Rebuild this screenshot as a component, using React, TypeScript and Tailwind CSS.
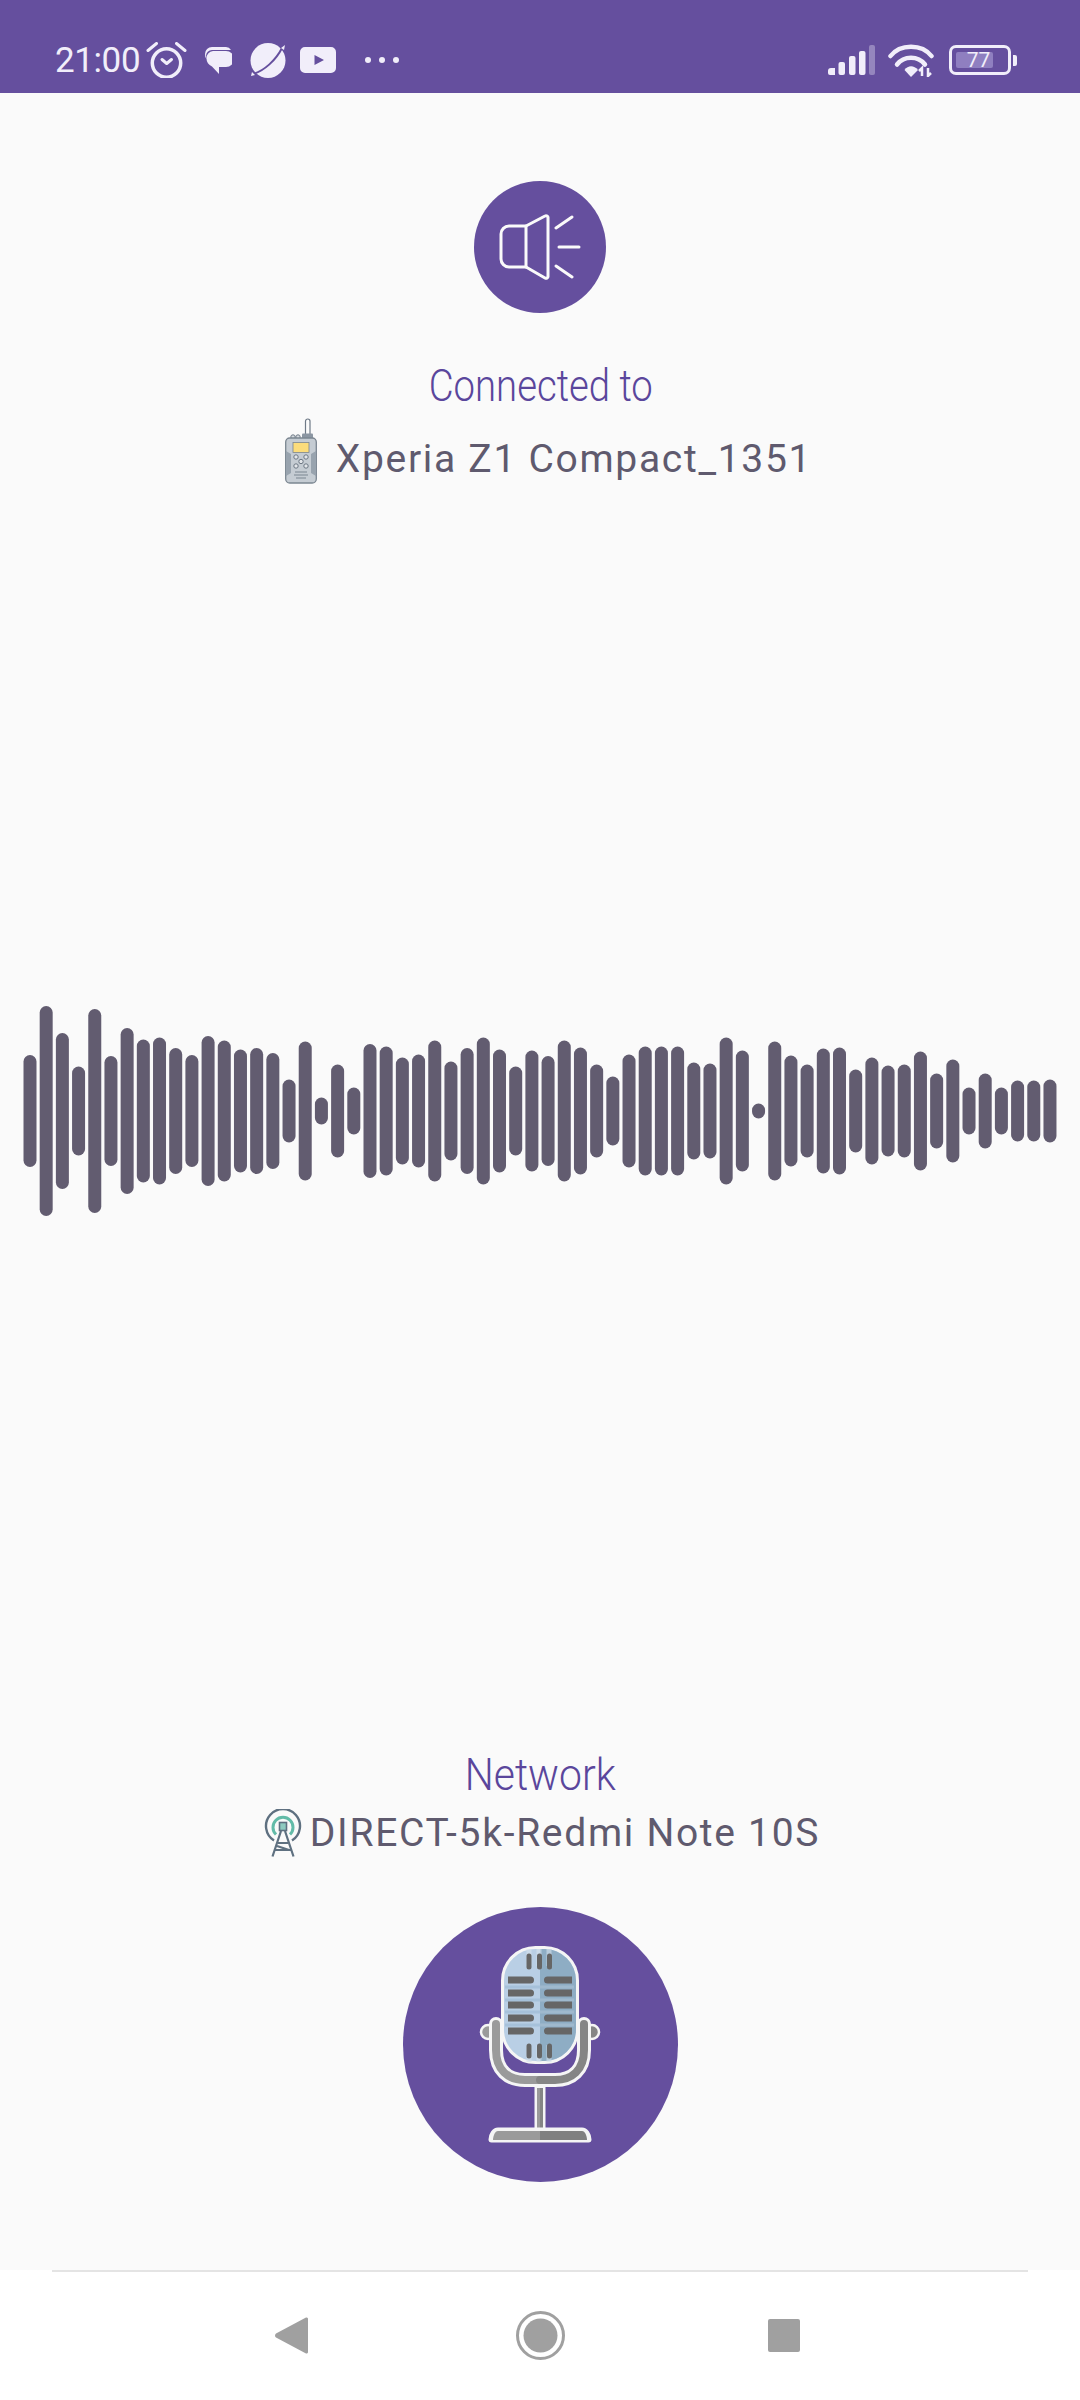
const bars = [
  112, 210, 156, 89, 204, 110, 166, 143, 147, 126, 112, 150, 141, 123, 126, 116,
  63, 139, 27, 93, 47, 134, 129, 107, 113, 141, 99, 126, 147, 123, 89, 121,
  110, 141, 127, 93, 69, 113, 129, 129, 129, 97, 95, 147, 121, 15, 139, 111,
  93, 125, 127, 83, 107, 91, 93, 119, 75, 103, 47, 75, 47, 61, 61, 63,
];

const AlarmIcon = () => (
  <svg width="41" height="36" viewBox="0 0 41 36" fill="none" stroke="#f1eefa" strokeLinecap="round">
    <circle cx="20.500" cy="21" r="14.200" strokeWidth="3.500" />
    <path d="M16 17.500l4.700 4 4.800-4" strokeWidth="3" strokeLinejoin="round" />
    <path d="M2 8.500L10.500 1.500M39 8.500L30.500 1.500" strokeWidth="3" />
  </svg>
);

const ChatIcon = () => (
  <svg width="28" height="28" viewBox="0 0 28 28">
    <path d="M8 1h14a6.500 6.500 0 0 1 5 3H8a6 6 0 0 0-6 6c0 1 .2 2 .6 3A7 7 0 0 1 1 8a7 7 0 0 1 7-7z" fill="#f1eefa" />
    <path d="M9 5h13a6 6 0 0 1 0 16h-7v7l-7-7.500C4.500 19 2.500 16 2.500 12.500A7 7 0 0 1 9 5z" fill="#f1eefa" />
  </svg>
);

const PlanetIcon = () => (
  <svg width="36" height="35" viewBox="0 0 36 35">
    <circle cx="18" cy="17.500" r="17.500" fill="#f1eefa" />
    <path d="M3 31C14 28 26 17 32 5" fill="none" stroke="#654f9e" strokeWidth="2" />
    <path d="M31 5l4-3-1 5zM2 29l-1 4 4-1z" fill="#f1eefa" />
  </svg>
);

const VideoIcon = () => (
  <svg width="36" height="26" viewBox="0 0 36 26">
    <path fillRule="evenodd" d="M5 0h26a5 5 0 0 1 5 5v16a5 5 0 0 1-5 5H5a5 5 0 0 1-5-5V5a5 5 0 0 1 5-5zM14.500 8v10l9.500-5z" fill="#f1eefa" />
  </svg>
);

const SignalIcon = () => (
  <svg width="47" height="30" viewBox="0 0 47 30" fill="#f1eefa">
    <path d="M0 26a3 3 0 0 1 3-3h4v7H2a2 2 0 0 1-2-2z" />
    <rect x="10.500" y="17" width="6.500" height="13" rx="2" />
    <rect x="21" y="11" width="6.500" height="19" rx="2" />
    <rect x="31" y="6" width="6.500" height="24" rx="2" />
    <rect x="41" y="0" width="6" height="30" rx="2" fillOpacity="0.35" />
  </svg>
);

const WifiIcon = () => (
  <svg width="46" height="34" viewBox="0 0 46 34" fill="none" stroke="#f1eefa" strokeWidth="4.500" strokeLinecap="round">
    <path d="M2.500 13C12 0.500 34 0.500 43.500 13" />
    <path d="M9 21.500C16 12.500 30 12.500 37 21.500" />
    <path d="M16.500 27L23 34l7-7C26 22 20 22 16.500 27z" fill="#f1eefa" stroke="none" />
    <path d="M34 33v-8l-3 3M40 25v8l3-3" strokeWidth="2.500" strokeLinecap="butt" />
  </svg>
);

const RadioIcon = () => (
  <svg width="32" height="66" viewBox="0 0 32 66" className="shrink-0">
    <rect x="20.500" y="1" width="4.500" height="18" rx="2.200" fill="#fbfbfb" stroke="#6f7a87" strokeWidth="1.200" />
    <circle cx="8" cy="19" r="2.200" fill="#d5dade" stroke="#6f7a87" />
    <circle cx="13" cy="19" r="2.200" fill="#d5dade" stroke="#6f7a87" />
    <rect x="17" y="15.500" width="11" height="5" rx="1" fill="#8b96a2" />
    <rect x="0.700" y="20" width="30.600" height="45" rx="4" fill="#c5ccd3" stroke="#7b8691" strokeWidth="1.300" />
    <path d="M1 33l5 3v19l-5 3zM31 33l-5 3v19l5 3z" fill="#98a3ae" />
    <rect x="8" y="24.500" width="16" height="10" fill="#fbdc7b" stroke="#7b8691" strokeWidth="0.800" />
    <g fill="#e3e6ea" stroke="#6b7683" strokeWidth="1">
      <circle cx="11" cy="39" r="2.200" />
      <circle cx="21" cy="39" r="2.200" />
      <circle cx="16" cy="43.500" r="2.200" />
      <circle cx="11" cy="48" r="2.200" />
      <circle cx="21" cy="48" r="2.200" />
    </g>
    <path d="M10 54h12M9 57h14M11 60h10" stroke="#7b8691" strokeWidth="1" />
  </svg>
);

const TowerIcon = () => (
  <svg width="38" height="48" viewBox="0 0 38 48" fill="none" className="shrink-0">
    <path d="M10 31.500a17 17 0 1 1 18 0" stroke="#5e7080" strokeWidth="2.400" />
    <path d="M12 25.500a10 10 0 1 1 14 0" stroke="#62bba8" strokeWidth="3" />
    <rect x="15.500" y="13.500" width="7" height="8" fill="#8ecabf" stroke="#5e7080" strokeWidth="1.600" />
    <path d="M17 22L8.500 47.500M21 22l8.500 25.500M14 34h10M11.500 41h15M13 37l12 4" stroke="#5e7080" strokeWidth="2.200" />
  </svg>
);

const SpeakerIcon = () => (
  <svg width="132" height="132" viewBox="0 0 132 132" fill="none" stroke="#fafafa" strokeWidth="3" strokeLinecap="round" strokeLinejoin="round">
    <path d="M52 45H35a8 8 0 0 0-8 8v25a8 8 0 0 0 8 8h17z" />
    <path d="M52 45l19-10a2 2 0 0 1 3 2v58a2 2 0 0 1-3 2L52 86" />
    <path d="M82 47l16-11M85 66h20M82 85l16 11" />
  </svg>
);

const MicIcon = () => (
  <svg width="124" height="200" viewBox="88 55 124 200">
    {/* holder */}
    <circle cx="98" cy="142" r="7" fill="#9a9a9a" stroke="#f5f5f5" strokeWidth="2.500" />
    <circle cx="202" cy="142" r="7" fill="#858585" stroke="#f5f5f5" strokeWidth="2.500" />
    <path d="M106 134v26c0 20 12 30 29 30h30c17 0 29-10 29-30v-26" fill="none" stroke="#f5f5f5" strokeWidth="14" strokeLinecap="round" />
    <path d="M106 134v26c0 20 12 30 29 30h15" fill="none" stroke="#9a9a9a" strokeWidth="8" strokeLinecap="round" />
    <path d="M194 134v26c0 20-12 30-29 30h-15" fill="none" stroke="#858585" strokeWidth="8" strokeLinecap="round" />
    {/* capsule */}
    <rect x="112.500" y="57.500" width="75" height="115" rx="33" fill="#b9cfe5" stroke="#f5f5f5" strokeWidth="3" />
    <path d="M150 59h4.500a31.500 31.500 0 0 1 31.500 31.500v49a31.500 31.500 0 0 1-31.500 31.500H150z" fill="#8eadc4" />
    <path d="M115 95.500h35v3h-35zM115 108.500h35v3h-35zM115 120.500h35v3h-35zM115 133.500h35v3h-35z" fill="#a6c1da" />
    <path d="M150 95.500h34v3h-34zM150 108.500h34v3h-34zM150 120.500h34v3h-34zM150 133.500h34v3h-34z" fill="#9fb9cd" />
    <path d="M139 59v17M149 59v17M159 59v17M139 155v17M149 155v17M159 155v17" stroke="#d7e3ee" strokeWidth="5" opacity="0.6" />
    <g fill="#666666">
      <path d="M118 86.500h22.500a3.500 3.500 0 0 1 0 7H118zM118 99.500h22.500a3.500 3.500 0 0 1 0 7H118zM118 111.500h22.500a3.500 3.500 0 0 1 0 7H118zM118 124.500h22.500a3.500 3.500 0 0 1 0 7H118zM118 137.500h22.500a3.500 3.500 0 0 1 0 7H118z" />
      <path d="M182 86.500h-24.500a3.500 3.500 0 0 0 0 7H182zM182 99.500h-24.500a3.500 3.500 0 0 0 0 7H182zM182 111.500h-24.500a3.500 3.500 0 0 0 0 7H182zM182 124.500h-24.500a3.500 3.500 0 0 0 0 7H182zM182 137.500h-24.500a3.500 3.500 0 0 0 0 7H182z" />
    </g>
    <path d="M139 66v11M149.500 66v11M159.500 66v11M139 156v10M149.500 156v10M159.500 156v10" stroke="#666666" strokeWidth="5" strokeLinecap="round" />
    {/* stem and base */}
    <rect x="144.500" y="197" width="11" height="42" fill="#f5f5f5" />
    <rect x="147" y="198" width="3" height="40" fill="#9a9a9a" />
    <rect x="150" y="198" width="3" height="40" fill="#858585" />
    <path d="M108 238.500h84c5 0 8.500 6 8.500 11 0 1.500-1 2-2 2h-97c-1 0-2-.5-2-2 0-5 3.500-11 8.500-11z" fill="#f5f5f5" stroke="#f5f5f5" strokeWidth="2" />
    <path d="M108 241h42v9h-47c0-4 2-9 5-9z" fill="#9a9a9a" />
    <path d="M192 241h-42v9h47c0-4-2-9-5-9z" fill="#808080" />
  </svg>
);

const StatusBar = () => (
  <div className="flex h-[93px] shrink-0 items-center bg-[#654f9e] pl-[55px] pr-[63px] pt-[27px] text-[#f1eefa]">
    <span className="w-[85px] font-['Roboto',sans-serif] text-[35px] leading-none tracking-[-0.4px]">21:00</span>
    <div className="ml-[6px]"><AlarmIcon /></div>
    <div className="ml-[17px]"><ChatIcon /></div>
    <div className="ml-[18px]"><PlanetIcon /></div>
    <div className="ml-[14px]"><VideoIcon /></div>
    <div className="ml-[29px] flex gap-[8px]">
      <span className="h-[6px] w-[6px] rounded-full bg-[#f1eefa]" />
      <span className="h-[6px] w-[6px] rounded-full bg-[#f1eefa]" />
      <span className="h-[6px] w-[6px] rounded-full bg-[#f1eefa]" />
    </div>
    <div className="ml-auto"><SignalIcon /></div>
    <div className="ml-[13px]"><WifiIcon /></div>
    <div className="ml-[15px] flex items-center gap-[2px]">
      <div className="flex h-[30px] w-[62px] items-center rounded-[7px] border-[3px] border-[#f1eefa] pl-[4px]">
        <div className="flex h-[16px] w-[37px] items-center justify-center rounded-[2px] bg-[#8f7fc0] pl-[8px] font-['Roboto',sans-serif] text-[21px] leading-none">77</div>
      </div>
      <span className="h-[11px] w-[4px] rounded-r-[2px] bg-[#f1eefa]" />
    </div>
  </div>
);

const Waveform = () => (
  <svg width="1080" height="210" viewBox="0 0 1080 210" className="mt-[522px] shrink-0">
    {bars.map((h, i) => (
      <rect key={i} x={23.5 + i * 16.19} y={105 - h / 2} width="13" height={h} rx="6.500" fill="#625c70" />
    ))}
  </svg>
);

const NavBar = () => (
  <div className="flex h-[130px] shrink-0 flex-col bg-white">
    <div className="mx-[52px] h-[2px] bg-[#e4e4e4]" />
    <div className="flex flex-1 items-center pb-[2px] pl-[275px]">
      <svg width="33" height="37" viewBox="0 0 33 37">
        <path d="M31 0.500L1 16.500a2.500 2.500 0 0 0 0 4L31 36.500a1.500 1.500 0 0 0 2-1.500V2a1.500 1.500 0 0 0-2-1.500z" fill="#a0a0a0" />
      </svg>
      <svg width="49" height="49" viewBox="0 0 49 49" className="ml-[208px]">
        <circle cx="24.500" cy="24.500" r="23" fill="none" stroke="#a0a0a0" strokeWidth="3" />
        <circle cx="24.500" cy="24.500" r="17" fill="#a0a0a0" />
      </svg>
      <div className="ml-[203px] h-[33px] w-[32px] rounded-[2px] bg-[#a0a0a0]" />
    </div>
  </div>
);

export default function App() {
  return (
    <div className="flex h-[2400px] w-[1080px] flex-col overflow-hidden bg-[#fafafa]">
      <StatusBar />
      <main className="flex min-h-0 flex-1 flex-col items-center">
        <div className="mt-[88px] h-[132px] w-[132px] shrink-0 rounded-full bg-[#654f9e]">
          <SpeakerIcon />
        </div>
        <h1 className="ml-[2px] mt-[49px] h-[48px] origin-center scale-x-[0.87] font-['Roboto',sans-serif] text-[44px] font-light leading-[48px] text-[#5a469c]">
          Connected to
        </h1>
        <div className="ml-[17px] mt-[8px] flex h-[66px] items-center gap-[19px]">
          <RadioIcon />
          <span className="pt-[17px] font-['Roboto',sans-serif] text-[39px] leading-none tracking-[1.7px] text-[#5f5a6e]">
            Xperia Z1 Compact_1351
          </span>
        </div>
        <Waveform />
        <h2 className="mt-[535px] h-[48px] origin-center scale-x-[0.93] font-['Roboto',sans-serif] text-[44px] font-light leading-[48px] text-[#5a469c]">
          Network
        </h2>
        <div className="ml-[4px] mt-[10px] flex h-[48px] items-center gap-[8px]">
          <TowerIcon />
          <span className="font-['Roboto',sans-serif] text-[39px] leading-none tracking-[1.7px] text-[#5f5a6e]">
            DIRECT-5k-Redmi Note 10S
          </span>
        </div>
        <div className="mt-[50px] flex h-[275px] w-[275px] shrink-0 items-center justify-center rounded-full bg-[#654f9e]">
          <MicIcon />
        </div>
      </main>
      <NavBar />
    </div>
  );
}
